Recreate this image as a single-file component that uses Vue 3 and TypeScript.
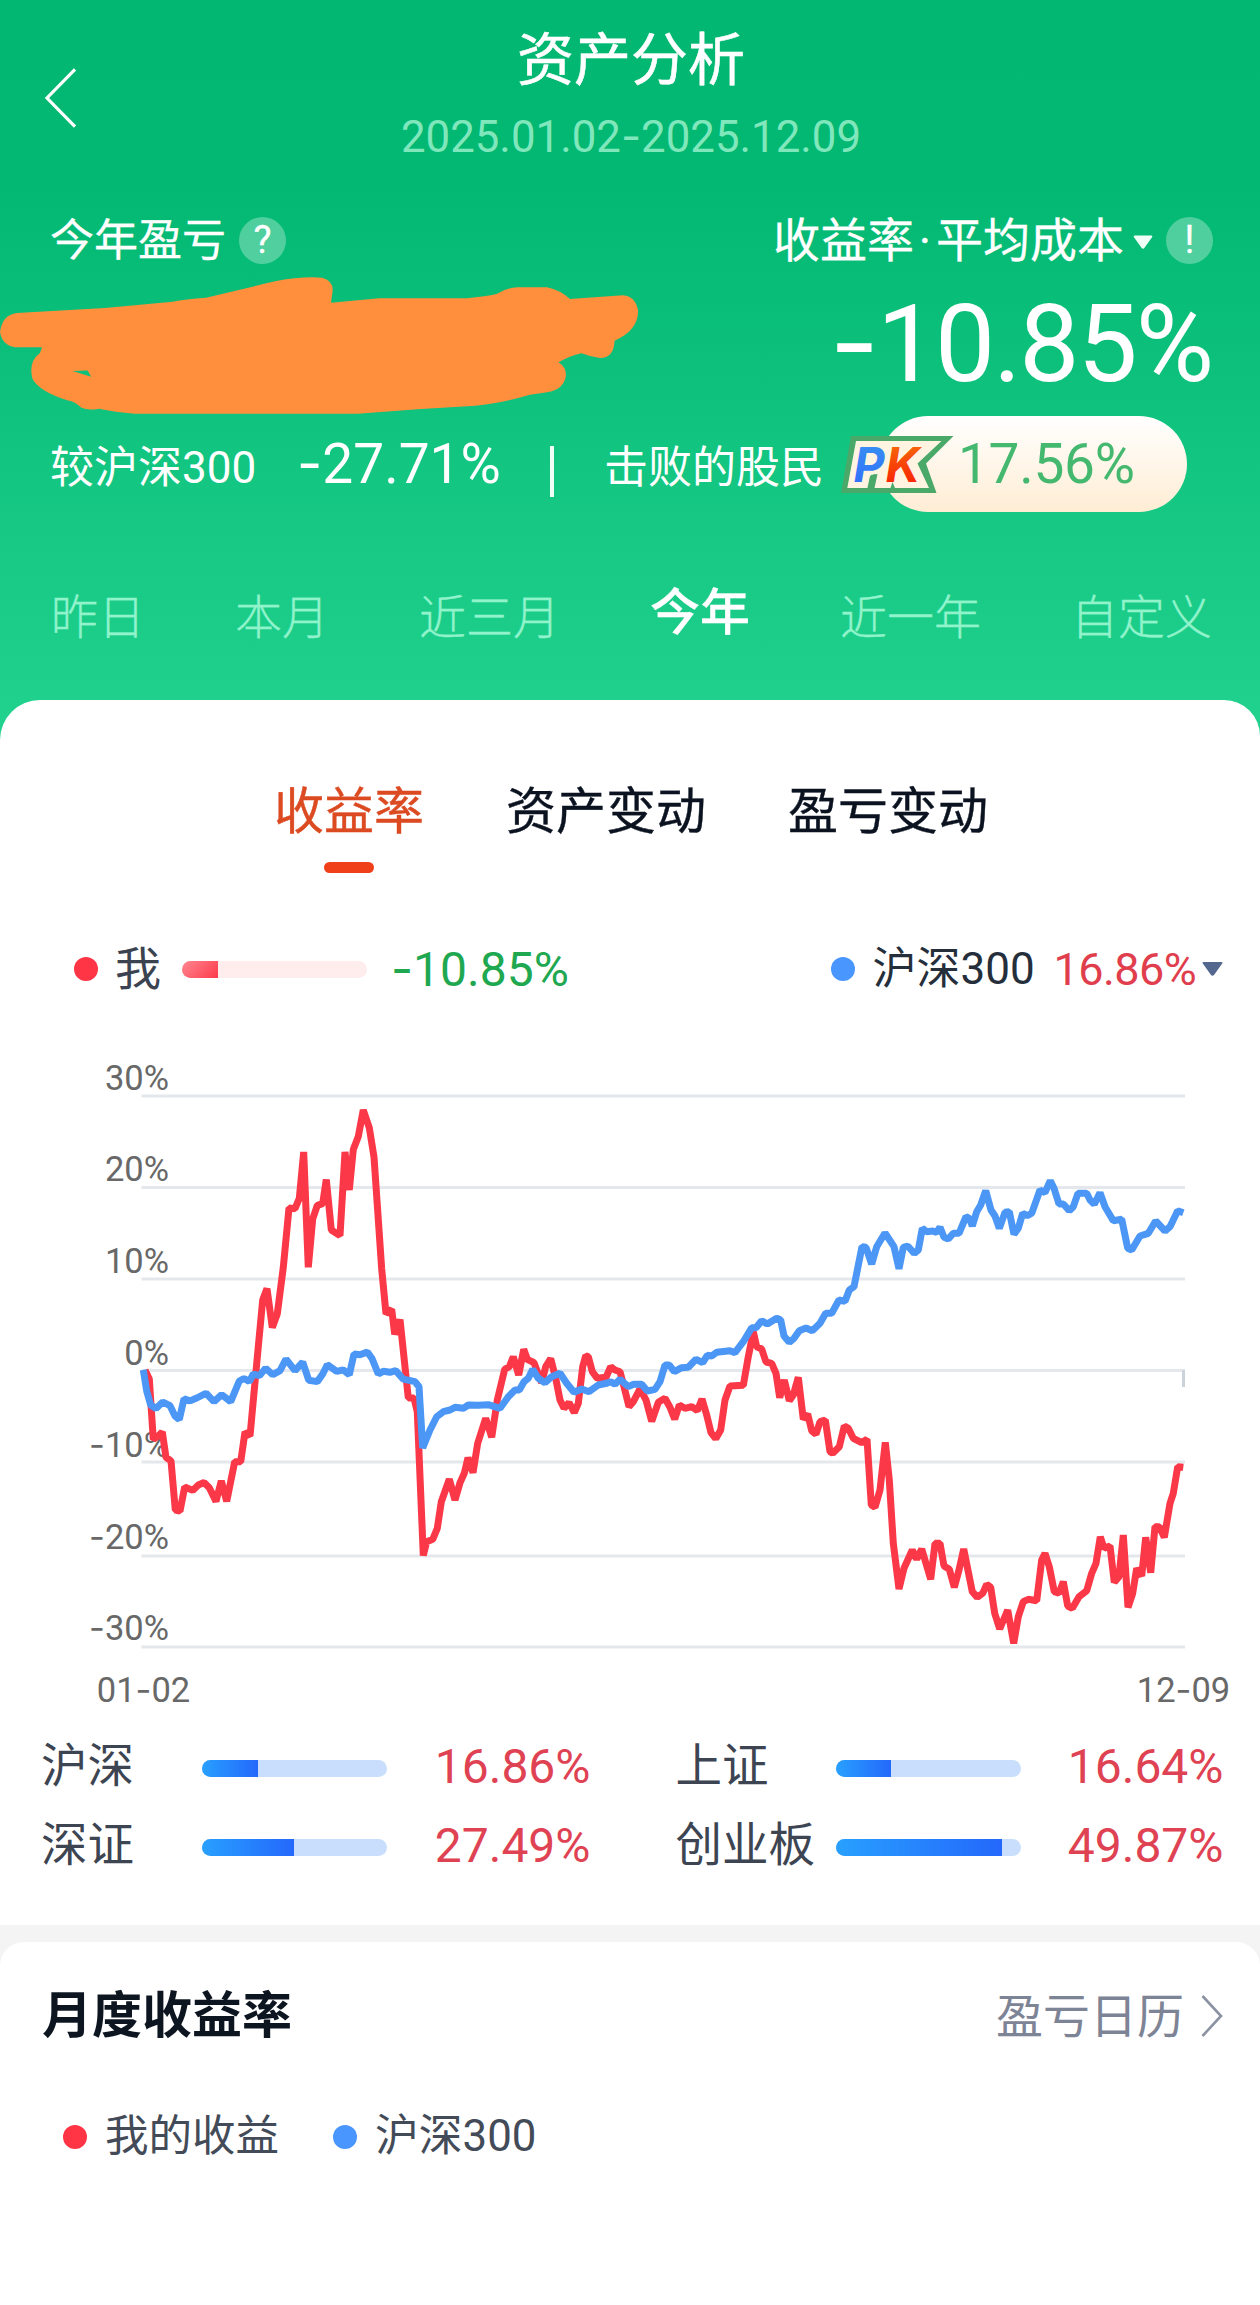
<script setup lang="ts">
interface Period { label: string; active?: boolean }
interface IndexRow { name: string; value: string; fill: number }

const periods: Period[] = [
  { label: '昨日' },
  { label: '本月' },
  { label: '近三月' },
  { label: '今年', active: true },
  { label: '近一年' },
  { label: '自定义' },
]

const views: Period[] = [
  { label: '收益率', active: true },
  { label: '资产变动' },
  { label: '盈亏变动' },
]

const indexes: IndexRow[] = [
  { name: '沪深', value: '16.86%', fill: 30.3 },
  { name: '上证', value: '16.64%', fill: 29.9 },
  { name: '深证', value: '27.49%', fill: 49.8 },
  { name: '创业板', value: '49.87%', fill: 90 },
]

const grid = [
  { y: 1096, base: 1090, sign: '', text: '30%' },
  { y: 1187.5, base: 1181.2, sign: '', text: '20%' },
  { y: 1279, base: 1273, sign: '', text: '10%' },
  { y: 1370.5, base: 1365, sign: '', text: '0%' },
  { y: 1462, base: 1456.5, sign: '-', text: '10%' },
  { y: 1556, base: 1548.5, sign: '-', text: '20%' },
  { y: 1647, base: 1640.2, sign: '-', text: '30%' },
]

const minePoints =
  '145,1369.9 149.3,1379 153.3,1439.5 158.3,1436 162.3,1432 166,1457.4 171,1460.8 175.3,1510 180,1511 184.7,1487 192.7,1490.4 198.3,1485 204,1482.5 209.3,1487.7 216,1501.4 221.3,1480.8 226.7,1501.4 234.7,1461.8 240.7,1461.8 245,1432 250,1436 258.3,1346.5 262.7,1300 267,1288.6 272.3,1327.5 277.3,1313.8 283.3,1267.3 289,1208 295,1208.7 299.3,1198.4 303.7,1152 308.3,1267.3 312.7,1219 317.3,1205.3 322.7,1203.6 326.3,1179.5 331.3,1230 340,1235.6 345,1152 349.3,1190 353.3,1149.5 358.3,1136.4 363.3,1110 369.3,1127.8 374,1157 381.7,1269 386,1313.8 391.7,1309.3 394.7,1334.4 400,1319.6 408.3,1398 414,1398 417.3,1412 ' +
  '423.3,1555.5 426.7,1541.7 432.7,1539.3 437.3,1528.3 441.3,1501.7 449.3,1479.3 455,1500 460,1482.7 464.3,1473.3 468,1457.7 473,1472.7 477.7,1443.3 485.7,1418.3 491.7,1437.3 497.3,1400 504.7,1369.3 509.3,1366.7 513.3,1356.7 518.7,1375 523.7,1349.3 527.3,1359.3 534,1362.7 541.7,1382.7 545.7,1366.7 550.7,1358.7 555.7,1378.3 560,1400 564,1408.3 569,1402.7 574.3,1412.7 578.3,1403.3 582.7,1366.7 585.7,1355.7 588.3,1356.7 592.3,1371.7 597.3,1378.3 606,1377.3 610.7,1366.7 615,1370 620,1371.7 624,1386.7 629,1406.7 633.3,1401.7 640,1389 646,1400 651.7,1421.3 658.3,1402.3 665,1398.3 670,1407.3 674.7,1419.3 679.3,1405 685,1408.3 691.7,1406.7 697.3,1410.7 702,1399 706.7,1415 711,1432.7 715.7,1438.7 720.7,1430 725,1400 730,1386 743.3,1385.3 748.3,1356.7 753.3,1331.7 ' +
  '756.7,1346.7 761.7,1349 766,1362 771.7,1363.3 776,1373.3 779.7,1397.7 784.3,1380 789.3,1400.7 793.3,1395 798.3,1377.3 803.3,1419.3 807.7,1414 811.7,1430.7 816,1434.3 820,1421.7 825.3,1420 830,1451.7 832.7,1453.3 839.3,1446.7 844.3,1426 848.3,1428.3 853.3,1438.3 861.7,1442.7 867,1439.3 871.3,1505 875,1507.3 880,1490 885.3,1442.3 889.3,1480 893.3,1543.3 899,1589 904,1568.3 912.3,1550 916.7,1559.3 921.7,1549 930.7,1579.3 935,1543.3 940,1543.3 944,1566 949.3,1569.3 954.3,1587.3 959,1570 963.7,1549 972.3,1591.7 977.3,1597.3 982.7,1593.3 986.7,1584.3 990.7,1587.3 994.7,1613.3 999.7,1629 1007.7,1610 1013.7,1643.3 1018.3,1616.7 1023.3,1601.7 1028.3,1599.3 1036.7,1600.7 1041.7,1560 1045,1553.3 1049.3,1566.7 1054.3,1591.7 1059,1593.3 1063.3,1581.7 1067.7,1606 1072.3,1608.3 1079,1596.7 1086.7,1590.7 1091.7,1573.3 1096,1563.3 1100.3,1536.7 1104,1548.3 1110,1546 1114.3,1582.3 1119,1576.7 1123.3,1535 1128,1607.3 1132.7,1593.3 1136.7,1568.3 1141.7,1576 1145.7,1537.3 1150.7,1572.7 1155,1526.7 1159.3,1526.7 1164.3,1537.3 1170,1503.3 1173.3,1493.3 1177.7,1466.7 1183.3,1467.3'

const csiPoints =
  '143.3,1369.9 146.7,1391 150.7,1405 156,1408.5 162.7,1402 170,1405.7 175,1416 179.3,1419.5 184,1398.8 190,1400.9 196.7,1398 206,1393.3 214,1401.6 221.7,1394.7 230.7,1401.6 239.3,1381 244,1378.5 249.3,1381.6 253.3,1374 259.3,1375.7 265.7,1368.2 272.7,1374.7 280,1370.6 286,1359.2 295,1370.6 302.7,1362 308.7,1380.2 317.3,1381.6 322.7,1374 327.3,1364.7 336.7,1371.3 343.3,1369.9 349.3,1374.7 354,1354 360,1354.7 367.3,1352 372,1358.5 378.3,1374 383.3,1371.3 390,1372.3 395.7,1370.6 403.3,1379.2 ' +
  '415,1381.7 419,1386.7 422.7,1448 430,1430 436.7,1416.7 443.3,1411.7 450,1410 455,1407.3 463.3,1408.3 468.3,1405 478.3,1405.3 488.3,1404.7 500,1408.3 508.3,1396.7 515,1390 519.3,1390 524,1381.7 528.3,1378.3 532.7,1369.3 538.3,1378.3 545,1382.7 551.7,1376.7 560,1373.3 566.7,1383.3 574,1392.3 581.7,1389 589,1391.7 598.3,1385 606.7,1383.3 610.7,1381.7 615,1384.3 620,1379.3 628.3,1386.7 633.3,1384.3 641.7,1384.3 647.3,1391 655,1389.3 660,1381.7 665,1365 669.3,1365 674.3,1371.7 681.7,1367.7 688.3,1367.3 696,1359.3 702.7,1362.7 707.3,1355.3 711.7,1356 716.7,1352.3 730,1350.7 735,1352.7 743.3,1341.7 751.7,1327.7 756,1327.7 ' +
  '761.7,1320.7 767.3,1324 776.7,1318.3 780.7,1320 784,1336 789.3,1342.3 794,1338.3 799.3,1330.7 806,1328 812.3,1330.7 820,1323.3 825.7,1313.3 831.7,1313.3 839,1300 845,1301.3 849.3,1290 854,1286.7 862,1246.7 866,1247.3 871.7,1264 876.7,1246.7 885,1233 894,1246.7 899,1268.7 903.3,1247.3 907.7,1246 914.3,1253.3 918.3,1250 922.3,1228.3 926.7,1231.7 932.7,1231 936.7,1232.3 940,1227.3 944,1237.3 948.3,1239 953.3,1233.3 959,1233.3 966,1216.7 969.3,1218.3 972.3,1226 976.7,1211.7 980.7,1205 985.7,1190.7 991,1210 995,1216 999.3,1228.3 1005,1212.3 1009.3,1211.7 1014,1234.3 1018.3,1228.3 1022.7,1213.3 1027.3,1215.7 1031.7,1213.3 1040,1190 1045,1192.7 1050.3,1180.7 1054,1188.3 1059,1204 1063.3,1204 1069.3,1210.7 1073.3,1206.7 1078,1193.3 1086.7,1193.3 1090,1200 1094.3,1204.3 1100,1192.7 1105,1206.7 1113.3,1220.7 1121.7,1219.3 1127.7,1248.3 1131.7,1250 1140,1236 1148.3,1233.3 1155.7,1221 1165,1231 1170,1226.7 1177.7,1210.7 1183.3,1212.7'
</script>

<template>
  <main class="page">
    <header class="hero">
      <nav class="nav">
        <svg class="back" width="34" height="62" viewBox="0 0 34 62">
          <path d="M31 2.3 3 31 31 59.7" fill="none" stroke="#fff" stroke-width="3.2" />
        </svg>
        <div class="heading">
          <h1>资产分析</h1>
          <p>2025.01.02<span class="dash">-</span>2025.12.09</p>
        </div>
      </nav>

      <div class="captions">
        <div class="caption">
          <span>今年盈亏</span>
          <span class="badge">?</span>
        </div>
        <div class="caption caption-right">
          <span class="method">收益率<i class="dot-sep">·</i>平均成本</span>
          <svg class="caret" width="20" height="14" viewBox="0 0 20 14">
            <path d="M2 .5h16q2 0 1 1.800l-7.500 10.500q-1.500 2-3 0L1 2.300Q0 .5 2 .5z" fill="#effff8" />
          </svg>
          <span class="badge">!</span>
        </div>
      </div>

      <div class="figures">
        <svg class="scribble" width="640" height="151" viewBox="0 265 640 151">
          <path
            fill="#ff8f3d"
            fill-rule="evenodd"
            d="M0 332Q2 315 17 313L105 308 172.600 301.700Q185 299 206 297.700L252.500 286.700Q278 280 294.600 278.300T322 277.700Q334 281 332.500 292L331 302.700 379 298.300H467Q486 296.500 496.600 294 506 287.600 517.700 287.300H547Q560 290 570 299L623 295.300Q635 296 638 310 639 330 614.500 340.700 614 358 600 358 591 357 581.600 353.300 572 355 558.500 362.300 566 367 566 375 564 390 547 392.300L530 394.700Q500 403.500 475.600 405.700L421 409 357.700 413.700H134.700Q115 412 99 408.700 88 411 81 407.500 75 401.500 68 400.500 40 392 32.500 379 28 362 40 353L42 347.300H14.700Q2 345 0 332zM72.400 371 91.300 376.700 87.500 370.500z"
          />
        </svg>
        <strong class="rate"><span class="dash">-</span>10.85%</strong>
      </div>

      <div class="stats">
        <span class="stat-label vs">较沪深300</span>
        <span class="stat-value"><span class="dash">-</span>27.71%</span>
        <i class="divider"></i>
        <span class="stat-label">击败的股民</span>
        <div class="pill">
          <svg class="pk" width="118" height="62" viewBox="0 0 118 62">
            <defs>
              <linearGradient id="pkP" x1="0" y1="0" x2="0" y2="1">
                <stop offset="0" stop-color="#3a95ee" />
                <stop offset="1" stop-color="#2f69ff" />
              </linearGradient>
              <linearGradient id="pkK" x1="0" y1="0" x2="0" y2="1">
                <stop offset="0" stop-color="#f4770c" />
                <stop offset="1" stop-color="#fb1200" />
              </linearGradient>
            </defs>
            <path d="M13 2H115.500L88 29.500 98.500 59H3z" fill="#4aa869" />
            <path d="M18 7H103.500L79.500 29.500 91 54H57L54.500 48 52.500 54H36.500L39.500 40 33 41 30.500 54H9.300z" fill="#fff4e2" />
            <path d="M29 56 32 42 37.500 40 34.500 56z" fill="#4aa869" />
            <g class="pk-text">
              <text x="15.500" y="48" fill="url(#pkP)">P</text>
              <text x="47.500" y="48" fill="url(#pkK)">K</text>
            </g>
          </svg>
          <span class="pill-value">17.56%</span>
        </div>
      </div>

      <div class="periods">
        <span v-for="p in periods" :key="p.label" :class="{ on: p.active }">{{ p.label }}</span>
      </div>
    </header>

    <section class="card">
      <div class="views">
        <span v-for="v in views" :key="v.label" :class="{ on: v.active }">{{ v.label }}</span>
      </div>

      <div class="legend">
        <i class="dot red"></i>
        <span class="me">我</span>
        <div class="bar bar-red"><i></i></div>
        <span class="me-value"><span class="dash">-</span>10.85%</span>
        <div class="compare">
          <i class="dot blue"></i>
          <span class="csi">沪深300</span>
          <span class="csi-value">16.86%</span>
          <svg width="21" height="14" viewBox="0 0 21 14">
            <path d="M1.500 0h18q1.500 0 .7 1.500l-8 11.200q-1.700 2-3.400 0L.8 1.500Q0 0 1.500 0z" fill="#54678f" />
          </svg>
        </div>
      </div>

      <svg class="chart" width="1260" height="732" viewBox="0 995 1260 732">
        <g stroke="#e4e7eb" stroke-width="3.200">
          <line v-for="g in grid" :key="g.y" x1="141.500" x2="1185" :y1="g.y" :y2="g.y" />
        </g>
        <line x1="1183.500" x2="1183.500" y1="1370" y2="1387" stroke="#cdd3da" stroke-width="3" />
        <g class="axis">
          <text v-for="g in grid" :key="g.base" x="169" :y="g.base" text-anchor="end"><tspan v-if="g.sign" class="dash">{{ g.sign }}</tspan>{{ g.text }}</text>
          <text x="143.500" y="1702" text-anchor="middle">01<tspan class="dash">-</tspan>02</text>
          <text x="1183.500" y="1702" text-anchor="middle">12<tspan class="dash">-</tspan>09</text>
        </g>
        <g fill="none" stroke-width="7" stroke-linejoin="bevel">
          <polyline :points="minePoints" stroke="#fa3848" />
          <polyline :points="csiPoints" stroke="#4c97f6" />
        </g>
      </svg>

      <div class="indexes">
        <div v-for="r in indexes" :key="r.name" class="index">
          <span class="index-name">{{ r.name }}</span>
          <div class="bar bar-blue"><i :style="{ width: r.fill + '%' }"></i></div>
          <span class="index-value">{{ r.value }}</span>
        </div>
      </div>
    </section>

    <section class="monthly">
      <div class="monthly-head">
        <h2>月度收益率</h2>
        <a>盈亏日历
          <svg width="22" height="42" viewBox="0 0 22 42">
            <path d="M1.500 1 20 21 1.500 41" fill="none" stroke="#8b92a1" stroke-width="2.600" />
          </svg>
        </a>
      </div>
      <div class="monthly-legend">
        <i class="dot red"></i><span class="mine">我的收益</span>
        <i class="dot blue"></i><span>沪深300</span>
      </div>
    </section>
  </main>
</template>

<style>
body {
  background: #fff;
}
</style>

<style scoped>
.page {
  width: 1260px;
  height: 2305px;
  overflow: hidden;
  background: #f4f4f4;
  font-family: Roboto, "Noto Sans CJK SC", sans-serif;
  line-height: 1;
  white-space: nowrap;
  display: flex;
  flex-direction: column;
}
i { font-style: normal; }
h1, h2, p { margin: 0; }
.dash { font-family: Inter, sans-serif; }

.hero {
  height: 740px;
  flex: none;
  box-sizing: border-box;
  background: linear-gradient(#01b771 0, #02b872 180px, #22d28f 740px);
  color: #fff;
}
.nav {
  height: 196px;
  display: grid;
  grid-template-columns: 160px 1fr 160px;
  align-items: center;
}
.back { margin-left: 44px; }
.heading {
  align-self: start;
  padding: 32px 0 0 2px;
  text-align: center;
}
h1 {
  font-size: 57px;
  font-weight: 400;
  -webkit-text-stroke: .6px currentColor;
}
.heading p {
  margin-top: 26px;
  font-size: 43.800px;
  color: #80e7bc;
}
.captions {
  margin-top: 20px;
  height: 49px;
  padding: 0 47px 0 50px;
  display: flex;
  justify-content: space-between;
  align-items: center;
}
.caption {
  display: flex;
  align-items: center;
  font-size: 44px;
  -webkit-text-stroke: .3px currentColor;
}
.caption-right { font-size: 47px; }
.method { padding-bottom: 1px; }
.dot-sep {
  display: inline-block;
  width: 22px;
  text-align: center;
}
.caret { margin: 2px 0 0 9px; }
.badge {
  width: 47px;
  height: 47px;
  margin-left: 13px;
  border-radius: 50%;
  background: rgba(255, 255, 255, .3);
  font-size: 38px;
  font-weight: 400;
  line-height: 47px;
  text-align: center;
}
.figures {
  height: 151px;
  display: flex;
  justify-content: space-between;
  align-items: center;
}
.rate {
  padding: 5px 48px 0 0;
  font-size: 107px;
  font-weight: 400;
  letter-spacing: -2px;
}
.stats {
  height: 96px;
  padding-left: 50px;
  display: flex;
  align-items: center;
}
.stat-label {
  padding-top: 7px;
  font-size: 44px;
}
.vs { width: 247px; }
.stat-value {
  width: 253px;
  font-size: 55px;
}
.divider {
  width: 4px;
  height: 51px;
  margin: 15px 50px 0 0;
  background: #effff8;
}
.pill {
  position: relative;
  width: 307px;
  height: 96px;
  box-sizing: border-box;
  margin-left: 56px;
  padding-left: 78px;
  border-radius: 48px;
  background: linear-gradient(#fff, #ffedd4);
  display: flex;
  align-items: center;
  color: #45b870;
  font-size: 55px;
  letter-spacing: -.3px;
}
.pk {
  position: absolute;
  left: -42px;
  top: 18px;
}
.pk-text {
  font-family: Inter, sans-serif;
  font-size: 48px;
  font-weight: 700;
  font-style: italic;
}
.periods {
  height: 60px;
  margin-top: 75px;
  padding: 0 48px 0 51px;
  display: flex;
  justify-content: space-between;
  align-items: center;
  font-size: 47px;
  font-weight: 300;
  color: #90f3cb;
  -webkit-text-stroke: .3px currentColor;
}
.periods .on {
  padding-bottom: 8px;
  font-size: 50px;
  font-weight: 500;
  color: #fff;
}

.card {
  height: 1225px;
  flex: none;
  box-sizing: border-box;
  margin-top: -40px;
  padding-top: 82px;
  border-radius: 40px 36px 0 0;
  background: #fff;
}
.views {
  height: 91px;
  padding-left: 274px;
  display: flex;
  gap: 82px;
  font-size: 50px;
  line-height: 60px;
  color: #0c1320;
  -webkit-text-stroke: .4px currentColor;
}
.views .on { color: #dc4a21; }
.views .on::after {
  content: "";
  display: block;
  width: 50px;
  height: 11px;
  margin: 20px auto 0;
  border-radius: 6px;
  background: #f0401a;
}
.legend {
  height: 50px;
  margin-top: 71px;
  padding: 0 37px 0 74px;
  display: flex;
  align-items: center;
}
.dot {
  width: 24px;
  height: 24px;
  border-radius: 50%;
}
.red { background: #ff3546; }
.blue { background: #4a96ff; }
.me {
  margin: 0 21px 0 17px;
  font-size: 46px;
  color: #3b4350;
}
.bar {
  width: 185px;
  height: 17px;
  border-radius: 9px;
  overflow: hidden;
}
.bar i { display: block; height: 100%; }
.bar-red { background: #ffecec; margin-top: 1px; }
.bar-red i {
  width: 36px;
  background: linear-gradient(135deg, #ff8791, #fd3a4b);
}
.bar-blue { background: #c8defc; margin-top: 3px; }
.bar-blue i { background: linear-gradient(90deg, #28a0ff, #2468fb); }
.me-value {
  margin-left: 24px;
  font-size: 48px;
  color: #20a851;
}
.compare {
  margin-left: auto;
  display: flex;
  align-items: center;
}
.csi {
  margin: 0 19px 0 17px;
  font-size: 44px;
  color: #252e3b;
}
.csi-value {
  margin-right: 6px;
  font-size: 45px;
  letter-spacing: -.6px;
  color: #e03e4d;
}
.chart { display: block; margin-top: 1px; }
.axis {
  font-size: 34.500px;
  fill: #686868;
}
.indexes {
  height: 158px;
  padding-left: 41px;
  display: grid;
  grid-template-columns: 634.500px 548px;
}
.index {
  height: 79px;
  display: flex;
  align-items: center;
}
.index-name {
  width: 161px;
  font-size: 46.500px;
  color: #3d4552;
}
.index-value {
  width: 203.500px;
  text-align: right;
  font-size: 48px;
  color: #df4252;
}

.monthly {
  flex: 1;
  margin-top: 17px;
  padding-top: 44px;
  border-radius: 24px 24px 0 0;
  background: #fff;
}
.monthly-head {
  height: 60px;
  padding: 0 37px 0 42px;
  display: flex;
  justify-content: space-between;
  align-items: center;
}
h2 {
  font-size: 50px;
  font-weight: 700;
  color: #0d1521;
}
.monthly-head a {
  display: flex;
  align-items: center;
  gap: 17px;
  font-size: 47px;
  color: #7d8495;
}
.monthly-legend {
  height: 50px;
  margin-top: 66px;
  padding-left: 63px;
  display: flex;
  align-items: center;
  font-size: 43.800px;
  color: #434b58;
}
.monthly-legend .dot { margin-right: 18px; }
.mine { width: 228px; font-size: 43.500px; }
</style>
